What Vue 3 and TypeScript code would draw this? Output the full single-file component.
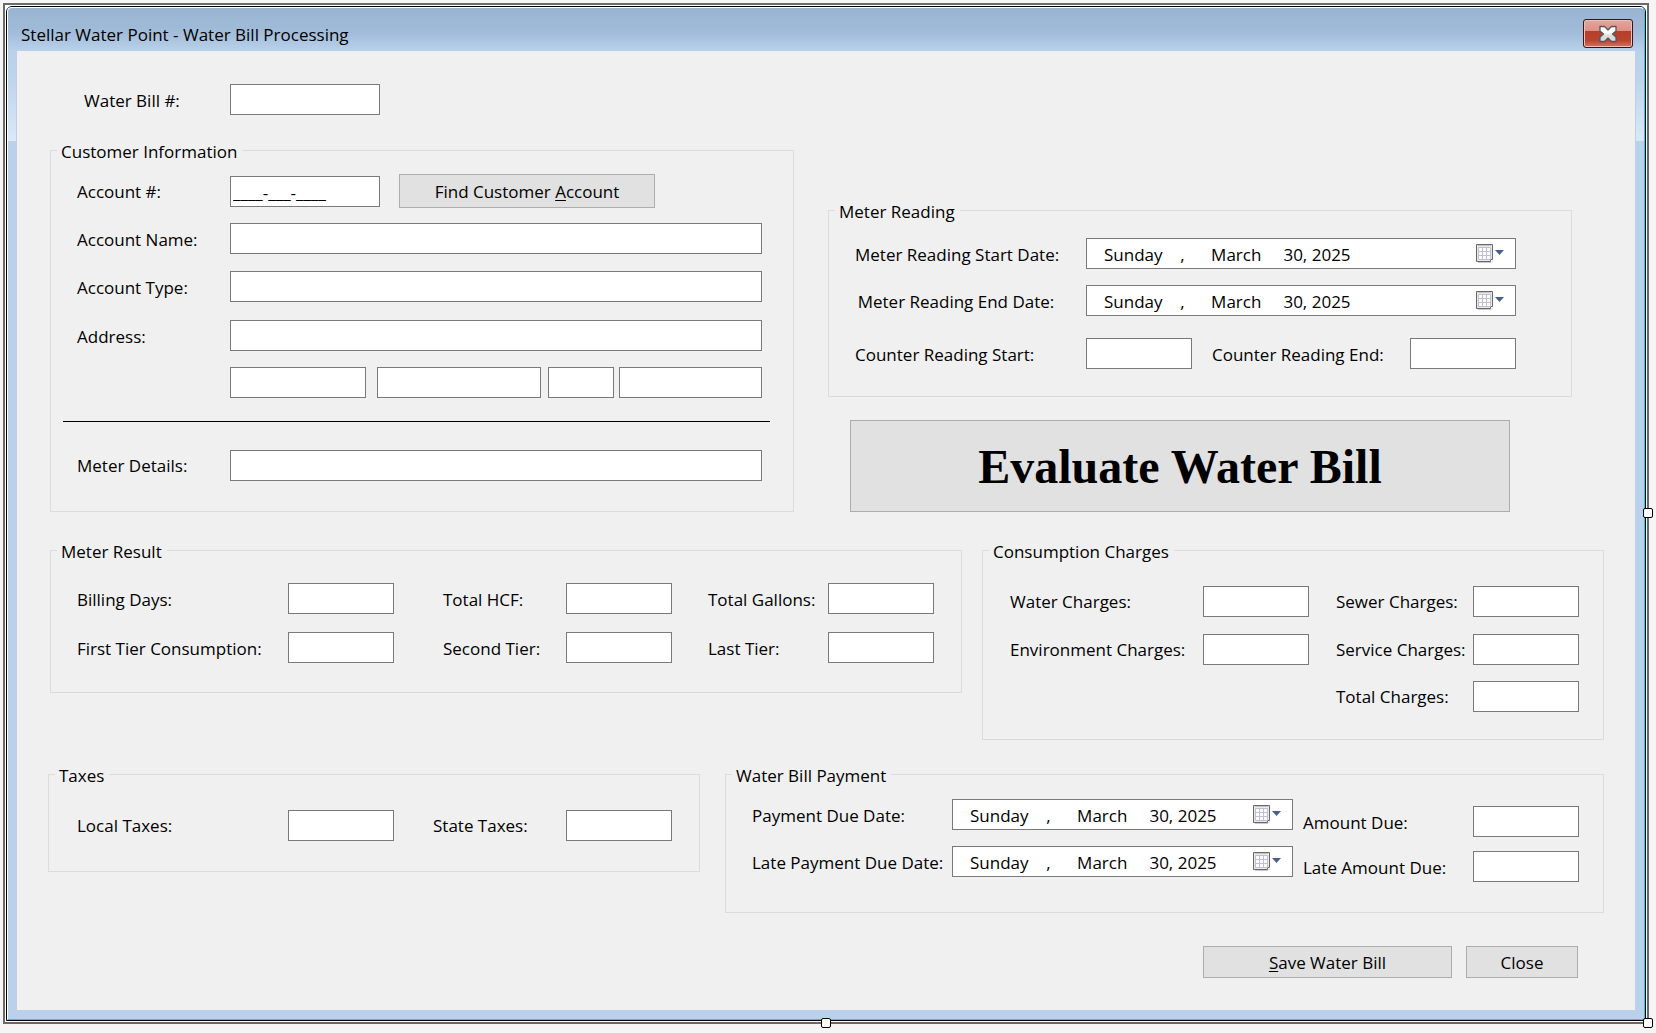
<script setup lang="ts">
import { reactive, ref } from 'vue'

interface Field {
  id: string
  label: string
}

const longDate = 'Sunday\u00a0\u00a0\u00a0\u00a0,\u00a0\u00a0\u00a0\u00a0\u00a0\u00a0March\u00a0\u00a0\u00a0\u00a0\u00a030, 2025'

const readingDates: Field[] = [
  { id: 'meter-start', label: 'Meter Reading Start Date:' },
  { id: 'meter-end', label: 'Meter Reading End Date:' },
]

const customerLines: Field[] = [
  { id: 'account-name', label: 'Account Name:' },
  { id: 'account-type', label: 'Account Type:' },
  { id: 'address', label: 'Address:' },
]

const addressParts: Field[] = [
  { id: 'city', label: 'City' },
  { id: 'county', label: 'County' },
  { id: 'state', label: 'State' },
  { id: 'zip', label: 'ZIP Code' },
]

const results: Field[] = [
  { id: 'billing-days', label: 'Billing Days:' },
  { id: 'total-hcf', label: 'Total HCF:' },
  { id: 'total-gallons', label: 'Total Gallons:' },
  { id: 'first-tier', label: 'First Tier Consumption:' },
  { id: 'second-tier', label: 'Second Tier:' },
  { id: 'last-tier', label: 'Last Tier:' },
]

const charges: Field[] = [
  { id: 'water-charges', label: 'Water Charges:' },
  { id: 'sewer-charges', label: 'Sewer Charges:' },
  { id: 'environment-charges', label: 'Environment Charges:' },
  { id: 'service-charges', label: 'Service Charges:' },
  { id: 'total-charges', label: 'Total Charges:' },
]

const taxes: Field[] = [
  { id: 'local-taxes', label: 'Local Taxes:' },
  { id: 'state-taxes', label: 'State Taxes:' },
]

const dueDates: Field[] = [
  { id: 'payment-due', label: 'Payment Due Date:' },
  { id: 'late-payment-due', label: 'Late Payment Due Date:' },
]

const amounts: Field[] = [
  { id: 'amount-due', label: 'Amount Due:' },
  { id: 'late-amount-due', label: 'Late Amount Due:' },
]

const accountNumber = ref('____-___-____')
const values = reactive<Record<string, string>>({})
const dates = reactive<Record<string, string>>({
  'meter-start': longDate,
  'meter-end': longDate,
  'payment-due': longDate,
  'late-payment-due': longDate,
})
</script>

<template>
  <div class="frame">
    <div class="edge">
      <div class="window">
        <header class="title-bar">
          <h1>Stellar Water Point - Water Bill Processing</h1>
          <button class="close-box" type="button" aria-label="Close window">
            <svg width="20" height="18" viewBox="0 0 20 18" aria-hidden="true">
              <defs>
                <linearGradient id="cross" x1="0" y1="0" x2="0" y2="1">
                  <stop offset="0.4" stop-color="#ffffff" />
                  <stop offset="0.6" stop-color="#dcdcdc" />
                </linearGradient>
              </defs>
              <path
                d="M2 1.500h4.500L10 5l3.500-3.500H18V6l-3.500 3 3.500 3v4.500h-4.500L10 13l-3.500 3.500H2V12l3.500-3L2 6z"
                fill="url(#cross)"
                stroke="#53565f"
                stroke-width="1.300"
                stroke-linejoin="round"
              />
            </svg>
          </button>
        </header>

        <form class="client" @submit.prevent>
          <div class="bill-number">
            <label for="bill-number">Water Bill #:</label>
            <input id="bill-number" v-model="values['bill-number']" type="text" />
          </div>

          <div class="row top-row">
            <fieldset class="customer">
              <legend>Customer Information</legend>
              <div class="grid customer-grid customer-lines">
                <label for="account-number">Account #:</label>
                <div class="account-line">
                  <input id="account-number" v-model="accountNumber" type="text" />
                  <button type="button" class="find">Find Customer <u>A</u>ccount</button>
                </div>
                <template v-for="f in customerLines" :key="f.id">
                  <label :for="f.id">{{ f.label }}</label>
                  <input :id="f.id" v-model="values[f.id]" type="text" />
                </template>
                <div class="address-parts">
                  <input
                    v-for="f in addressParts"
                    :id="f.id"
                    :key="f.id"
                    v-model="values[f.id]"
                    :class="f.id"
                    type="text"
                    :aria-label="f.label"
                  />
                </div>
              </div>
              <hr />
              <div class="grid customer-grid">
                <label for="meter-details">Meter Details:</label>
                <input id="meter-details" v-model="values['meter-details']" type="text" />
              </div>
            </fieldset>

            <div class="reading-column">
              <fieldset class="reading">
                <legend>Meter Reading</legend>
                <div class="grid reading-grid">
                  <template v-for="f in readingDates" :key="f.id">
                    <label :for="f.id" class="reading-label">{{ f.label }}</label>
                    <div class="date">
                      <input :id="f.id" v-model="dates[f.id]" type="text" />
                      <button type="button" :aria-label="'Choose ' + f.label">
                        <svg width="30" height="20" viewBox="0 0 30 20" aria-hidden="true">
                          <path d="M2 18.500h13l2-2" fill="none" stroke="#c9c9c9" />
                          <path d="M.5.500h16v15h-2v2h-14z" fill="#e4e9f4" stroke="#6e6564" stroke-linejoin="round" />
                          <path d="M2 1.500h13" stroke="#c9c4c2" />
                          <path d="M2.500 3.500h12v12h-12z" fill="#fafbfe" />
                          <path d="M2.500 3.500h12v12h-12zM6.500 3.500v12M10.500 3.500v12M2.500 7.500h12M2.500 11.500h12" fill="none" stroke="#bfc2ca" />
                          <path d="M19 6h9l-4.500 5z" fill="#4a5f8c" />
                        </svg>
                      </button>
                    </div>
                  </template>
                  <label for="counter-start">Counter Reading Start:</label>
                  <input id="counter-start" v-model="values['counter-start']" type="text" />
                  <label for="counter-end" class="counter-end">Counter Reading End:</label>
                  <input id="counter-end" v-model="values['counter-end']" type="text" />
                </div>
              </fieldset>
              <button type="button" class="evaluate">Evaluate Water Bill</button>
            </div>
          </div>

          <div class="row result-row">
            <fieldset class="result">
              <legend>Meter Result</legend>
              <div class="grid result-grid">
                <template v-for="f in results" :key="f.id">
                  <label :for="f.id">{{ f.label }}</label>
                  <input :id="f.id" v-model="values[f.id]" type="text" />
                </template>
              </div>
            </fieldset>

            <fieldset class="charges">
              <legend>Consumption Charges</legend>
              <div class="grid charges-grid">
                <template v-for="f in charges" :key="f.id">
                  <label :for="f.id" :class="f.id">{{ f.label }}</label>
                  <input :id="f.id" v-model="values[f.id]" type="text" />
                </template>
              </div>
            </fieldset>
          </div>

          <div class="row payment-row">
            <fieldset class="taxes">
              <legend>Taxes</legend>
              <div class="grid taxes-grid">
                <template v-for="f in taxes" :key="f.id">
                  <label :for="f.id">{{ f.label }}</label>
                  <input :id="f.id" v-model="values[f.id]" type="text" />
                </template>
              </div>
            </fieldset>

            <fieldset class="payment">
              <legend>Water Bill Payment</legend>
              <div class="payment-columns">
                <div class="grid due-grid">
                  <template v-for="f in dueDates" :key="f.id">
                    <label :for="f.id">{{ f.label }}</label>
                    <div class="date">
                      <input :id="f.id" v-model="dates[f.id]" type="text" />
                      <button type="button" :aria-label="'Choose ' + f.label">
                        <svg width="30" height="20" viewBox="0 0 30 20" aria-hidden="true">
                          <path d="M2 18.500h13l2-2" fill="none" stroke="#c9c9c9" />
                          <path d="M.5.500h16v15h-2v2h-14z" fill="#e4e9f4" stroke="#6e6564" stroke-linejoin="round" />
                          <path d="M2 1.500h13" stroke="#c9c4c2" />
                          <path d="M2.500 3.500h12v12h-12z" fill="#fafbfe" />
                          <path d="M2.500 3.500h12v12h-12zM6.500 3.500v12M10.500 3.500v12M2.500 7.500h12M2.500 11.500h12" fill="none" stroke="#bfc2ca" />
                          <path d="M19 6h9l-4.500 5z" fill="#4a5f8c" />
                        </svg>
                      </button>
                    </div>
                  </template>
                </div>
                <div class="grid amount-grid">
                  <template v-for="f in amounts" :key="f.id">
                    <label :for="f.id">{{ f.label }}</label>
                    <input :id="f.id" v-model="values[f.id]" type="text" />
                  </template>
                </div>
              </div>
            </fieldset>
          </div>

          <footer class="actions">
            <button type="submit" class="save"><u>S</u>ave Water Bill</button>
            <button type="button" class="close">Close</button>
          </footer>
        </form>
      </div>
    </div>
    <span class="handle handle-right"></span>
    <span class="handle handle-bottom"></span>
    <span class="handle handle-corner"></span>
  </div>
</template>

<style>
body {
  margin: 0;
  background: #f5f5f5;
}

#app {
  display: flow-root;
}
</style>

<style scoped>
* {
  box-sizing: border-box;
}

.frame {
  position: relative;
  margin: 3px 7px 9px 3px;
  padding: 1px;
  border: 2px solid #696969;
  background: #fff;
  color: #000;
  font: 17px/24px 'Open Sans', 'Noto Sans', sans-serif;
}

.edge {
  border: 1px solid #000;
  border-radius: 6px 6px 0 0;
  background: #fff;
}

.window {
  border: 1px solid #fff;
  border-right-color: #35c1e4;
  border-bottom-color: #35c1e4;
  border-radius: 5px 5px 0 0;
  padding: 0 9px 9px;
  background:
    linear-gradient(#99b4d1, #9fbad6 45%, #a3bddb 60%, #b9d1ea) top / 100% 43px no-repeat,
    linear-gradient(#b9d1ea, #bdd4ec 30%, #dbe8f6) 0 43px / 100% 90px no-repeat,
    #b9d1ea;
}

.title-bar {
  display: flex;
  align-items: flex-start;
  justify-content: space-between;
  height: 43px;
  padding: 11px 2px 0 4px;
}

h1 {
  margin: 4px 0 0;
  font: inherit;
}

.client {
  padding: 33px 0 32px;
  background: #f0f0f0;
  box-shadow: 0 0 0 1px #b9d1ea;
}

label {
  padding-top: 2px;
  white-space: nowrap;
}

input {
  width: 100%;
  min-width: 0;
  height: 31px;
  margin: 0;
  padding: 2px 2px 0;
  border: 1px solid #7a7a7a;
  border-radius: 0;
  background: #fff;
  color: #000;
  font: inherit;
}

button {
  margin: 0;
  padding: 2px 0 0;
  border: 1px solid #adadad;
  border-radius: 0;
  background: #e1e1e1;
  color: #000;
  font: inherit;
}

.close-box {
  display: flex;
  align-items: center;
  justify-content: center;
  width: 50px;
  height: 29px;
  padding: 0;
  border: 1px solid #3f0f1c;
  border-radius: 3px;
  background: linear-gradient(#e6a49c, #df8f83 40%, #b63f2a 41%, #b8442e 75%, #d17561);
  box-shadow: inset 0 0 0 1px #eebfb8;
}

u {
  text-underline-offset: 2px;
}

fieldset {
  min-width: 0;
  margin: 0;
  border: 1px solid #dcdcdc;
}

legend {
  padding: 3px 5px 0 4px;
  line-height: 21px;
}

.grid {
  display: grid;
  grid-auto-rows: 48px;
  align-items: center;
}

.row {
  display: grid;
  align-items: start;
}

.bill-number {
  display: grid;
  grid-template-columns: 146px 150px;
  align-items: center;
  padding-left: 67px;
}

.top-row {
  grid-template-columns: 1fr 1fr;
  column-gap: 34px;
  padding: 23px 63px 0 33px;
}

.customer {
  padding: 5px 31px 22px 26px;
}

.customer > legend,
.reading > legend,
.result > legend,
.payment > legend {
  margin-left: -20px;
}

.customer-grid {
  grid-template-columns: 153px 1fr;
}

.customer-lines {
  grid-template-rows: 48px 47px 49px 49px 45px;
}

.account-line {
  display: flex;
  align-items: center;
  gap: 19px;
}

.account-line input {
  width: 150px;
}

.find {
  width: 256px;
  height: 34px;
}

.address-parts {
  display: grid;
  grid-column: 2;
  grid-template-columns: 136fr 11fr 165fr 7fr 66fr 5fr 143fr;
}

.county {
  grid-column: 3;
}

.state {
  grid-column: 5;
}

.zip {
  grid-column: 7;
}

hr {
  height: 1px;
  margin: 16px -8px 19px -14px;
  border: 0;
  background: #000;
}

.reading-column {
  padding-top: 60px;
}

.reading {
  padding: 8px 55px 13px 26px;
}

.reading-grid {
  grid-template-columns: 231px 106px 1fr 106px;
  grid-template-rows: 47px 47px 59px;
}

.reading-label {
  width: 202px;
  text-align: center;
}

.counter-end {
  padding-left: 20px;
}

.reading-grid .date {
  grid-column: 2 / 5;
}

.date {
  display: flex;
  align-items: center;
  height: 31px;
  border: 1px solid #7a7a7a;
  background: #fff;
}

.date input {
  flex: 1;
  height: 29px;
  padding: 2px 0 0 17px;
  border: 0;
}

.date button {
  display: flex;
  margin-right: 9px;
  padding: 0;
  border: 0;
  background: none;
}

.evaluate {
  display: block;
  width: calc(100% - 84px);
  height: 92px;
  margin: 23px 62px 0 22px;
  font: bold 48px/56px 'Liberation Serif', 'Times New Roman', serif;
}

.result-row {
  grid-template-columns: 912fr 622fr;
  column-gap: 20px;
  padding: 26px 31px 0 33px;
}

.result {
  padding: 12px 27px 20px 26px;
}

.result-grid {
  grid-auto-rows: 49px;
  grid-template-columns: 211fr 106fr 172fr 106fr 156fr 106fr;
}

.result-grid label:nth-of-type(3n + 2) {
  padding-left: 49px;
}

.result-grid label:nth-of-type(3n) {
  padding-left: 36px;
}

.charges {
  padding: 15px 24px 20px 27px;
}

.charges > legend,
.taxes > legend {
  margin-left: -21px;
}

.taxes > legend {
  margin-left: -22px;
}

.charges-grid {
  grid-template-columns: 193fr 106fr 164fr 106fr;
  grid-template-rows: 48px 48px 46px;
}

.sewer-charges,
.service-charges,
.total-charges {
  grid-column: 3;
  padding-left: 27px;
}

.payment-row {
  grid-template-columns: 652fr 879fr;
  column-gap: 25px;
  padding: 22px 31px 0;
}

.taxes {
  padding: 15px 27px 22px 28px;
}

.taxes-grid {
  grid-template-columns: 211fr 106fr 172fr 106fr;
}

.taxes-grid label:nth-of-type(2) {
  padding-left: 39px;
}

.payment {
  padding: 5px 24px 23px 26px;
}

.payment-columns {
  display: flex;
  align-items: flex-start;
  gap: 10px;
}

.due-grid {
  flex: 1;
  grid-auto-rows: 47px;
  grid-template-columns: 200px 1fr;
}

.amount-grid {
  grid-auto-rows: 45px;
  grid-template-columns: 170px 106px;
  padding-top: 8px;
}

.actions {
  display: flex;
  justify-content: flex-end;
  gap: 14px;
  padding: 33px 57px 0 0;
}

.save,
.close {
  height: 32px;
}

.save {
  width: 249px;
}

.close {
  width: 112px;
}

.handle {
  position: absolute;
  width: 10px;
  height: 10px;
  border: 1px solid #000;
  border-radius: 2px;
  background: #fff;
}

.handle-right {
  top: calc(50% - 6px);
  right: -6px;
}

.handle-bottom {
  bottom: -6px;
  left: calc(50% - 5px);
}

.handle-corner {
  right: -6px;
  bottom: -6px;
}
</style>
